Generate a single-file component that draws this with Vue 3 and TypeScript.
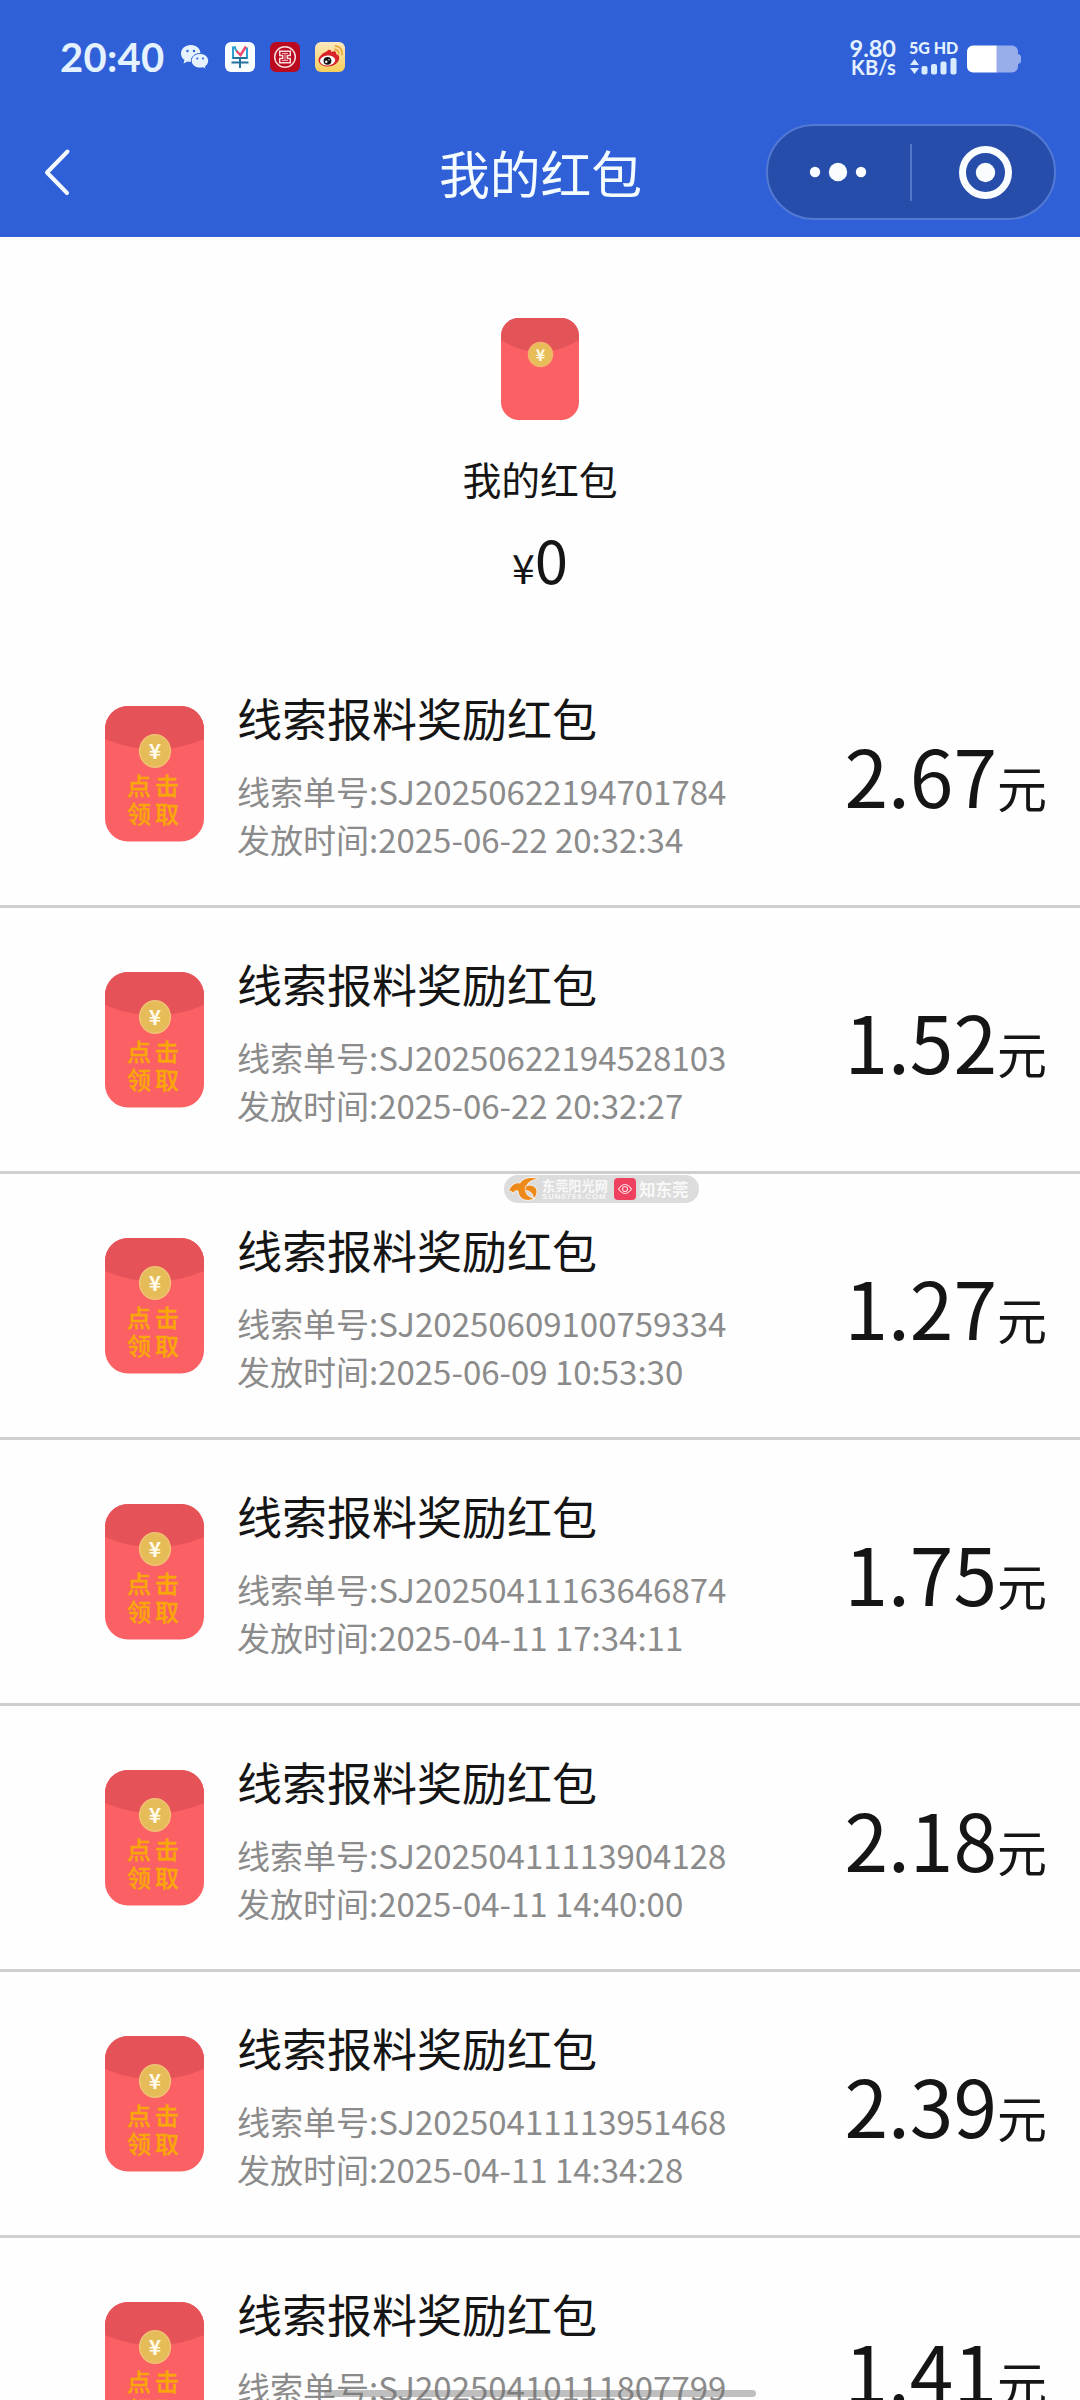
<script setup lang="ts">
interface Reward {
  id: string
  time: string
  amount: string
}

const rewards: Reward[] = [
  { id: 'SJ20250622194701784', time: '2025-06-22 20:32:34', amount: '2.67' },
  { id: 'SJ20250622194528103', time: '2025-06-22 20:32:27', amount: '1.52' },
  { id: 'SJ20250609100759334', time: '2025-06-09 10:53:30', amount: '1.27' },
  { id: 'SJ20250411163646874', time: '2025-04-11 17:34:11', amount: '1.75' },
  { id: 'SJ20250411113904128', time: '2025-04-11 14:40:00', amount: '2.18' },
  { id: 'SJ20250411113951468', time: '2025-04-11 14:34:28', amount: '2.39' },
  { id: 'SJ20250410111807799', time: '', amount: '1.41' },
]
</script>

<template>
  <div class="screen">
    <header class="top">
      <div class="status">
        <span class="clock">20:40</span>
        <svg class="wechat" width="30" height="26" viewBox="0 0 30 26">
          <path d="M11 1C5 1 1 4.700 1 9.500c0 2.700 1.300 5 3.500 6.500L3.500 19.500l4-2c1.100.3 2.300.5 3.500.5 5.500 0 9.500-3.700 9.500-8.500S16.500 1 11 1z" fill="#e6f3ff" />
          <path d="M20 9.500c-5 0-8.700 3.200-8.700 7.300s3.700 7.300 8.700 7.300c1 0 2-.1 2.900-.4l3.300 1.600-.8-2.900c2-1.300 3.200-3.300 3.200-5.600 0-4.100-3.600-7.300-8.600-7.300z" fill="#e6f3ff" stroke="#2f60d8" stroke-width="1" />
          <circle cx="7.500" cy="7" r="1.200" fill="#2f60d8" /><circle cx="14" cy="7" r="1.200" fill="#2f60d8" />
          <circle cx="17.300" cy="14.500" r="1.100" fill="#2f60d8" /><circle cx="23" cy="14.500" r="1.100" fill="#2f60d8" />
        </svg>
        <svg class="app" viewBox="0 0 30 30">
          <rect width="30" height="30" rx="6" fill="#fbfeff" />
          <g fill="none" stroke-width="2">
            <path d="M11 5.500H8v10.500h14V5.500" stroke="#2e9fd0" />
            <path d="M8 16h14M6.500 20.500h17M15 16v10" stroke="#26709f" />
            <path d="M9 4.500l3 5" stroke="#2e9fd0" />
            <path d="M11.500 9l4 4L21 4.500" stroke="#e8496a" stroke-width="2.400" />
          </g>
        </svg>
        <svg class="app" viewBox="0 0 30 30">
          <rect width="30" height="30" rx="6" fill="#b90a20" />
          <circle cx="15" cy="15" r="10.300" fill="none" stroke="#fbdcdc" stroke-width="1.500" />
          <path d="M9.700 9.300h10.600v4.200h-3v3h3v4.200H9.700v-4.200h3v-3h-3z" fill="none" stroke="#fbdcdc" stroke-width="1.500" />
          <path d="M12 11.400h6M12 18.600h6M15 11.400v7.200" stroke="#fbdcdc" stroke-width=".8" />
        </svg>
        <svg class="app" viewBox="0 0 30 30">
          <defs>
            <linearGradient id="weibo" x1="0" y1="0" x2="0" y2="1">
              <stop offset="0" stop-color="#fbe9bd" /><stop offset="1" stop-color="#f8cf5c" />
            </linearGradient>
          </defs>
          <rect width="30" height="30" rx="6" fill="url(#weibo)" />
          <path d="M11.500 9.500c2.200-2.500 5-2.600 4.500.4 3-1.400 6-1 5 2.200 3.200.9 3.800 3.400 2.800 6-1.500 4-6 6.400-11 6.400S3.500 22 3.500 18c0-3 4-7 8-8.500z" fill="#d8232a" />
          <ellipse cx="12.600" cy="18.500" rx="7.600" ry="5" fill="#fff" transform="rotate(-6 12.600 18.500)" />
          <circle cx="12.500" cy="18.800" r="3.900" fill="#111" />
          <circle cx="11.300" cy="19.700" r="1.200" fill="#fff" /><circle cx="14" cy="17.800" r=".7" fill="#fff" />
          <path d="M20.500 3.800a7.200 7.200 0 0 1 6.500 8.700M20 7.500a3.800 3.800 0 0 1 3.600 4" fill="none" stroke="#e8a53c" stroke-width="1.800" stroke-linecap="round" />
        </svg>
        <div class="speed"><span>9.80</span><span class="unit">KB/s</span></div>
        <div class="network">
          <span>5G HD</span>
          <svg width="48" height="17" viewBox="0 0 48 17">
            <g fill="#d9ebff">
              <path d="M5.500 1l4.500 6H1zM1 10h9l-4.500 6z" />
              <rect x="12.500" y="8" width="6" height="8.500" rx="2" />
              <rect x="22" y="6" width="6" height="10.500" rx="2" />
              <rect x="31.500" y="3.500" width="6" height="13" rx="2" />
              <rect x="41.500" y="0" width="6" height="16.500" rx="2" />
            </g>
          </svg>
        </div>
        <svg class="battery" width="54" height="28" viewBox="0 0 54 28">
          <path d="M29 .500h16a6 6 0 0 1 6 6V9c2 .5 3 1.500 3 3v4c0 1.500-1 2.500-3 3v2.500a6 6 0 0 1-6 6H29z" fill="#98aeeb" />
          <path d="M6 .500h23.500v27H6a6 6 0 0 1-6-6v-15a6 6 0 0 1 6-6z" fill="#fff" />
        </svg>
      </div>
      <nav class="nav">
        <svg class="back" width="28" height="48" viewBox="0 0 28 48">
          <path d="M24.500 3.500L4 24.500l20 20.500" fill="none" stroke="#f4faff" stroke-width="4" stroke-linecap="round" stroke-linejoin="round" />
        </svg>
        <h1>我的红包</h1>
        <svg class="capsule" width="290" height="96" viewBox="0 0 290 96">
          <rect x="1" y="1" width="288" height="94" rx="47" fill="#264da9" stroke="#5279d4" stroke-width="2" />
          <g fill="#fafdff">
            <circle cx="49" cy="48" r="5.200" /><circle cx="72" cy="48" r="9.200" /><circle cx="95" cy="48" r="5.200" />
            <circle cx="219.500" cy="48.500" r="9.700" />
          </g>
          <path d="M145 20v57" stroke="#5276c8" stroke-width="2" />
          <circle cx="219.500" cy="48.500" r="23" fill="none" stroke="#fafdff" stroke-width="7" />
        </svg>
      </nav>
    </header>

    <section class="hero">
      <svg width="78" height="102" viewBox="0 0 78 102">
        <defs><clipPath id="hero-shape"><rect width="78" height="102" rx="18" /></clipPath></defs>
        <g clip-path="url(#hero-shape)">
          <rect width="78" height="102" fill="#fb6064" />
          <path d="M0 0h78v22Q39 46 0 22z" fill="#e35459" />
        </g>
        <circle cx="39.500" cy="36.500" r="12" fill="#e7bd58" stroke="#f3b36c" stroke-width="1.500" />
        <text x="39.500" y="43" class="coin" font-size="16">¥</text>
      </svg>
      <p class="label">我的红包</p>
      <p class="balance"><small>¥</small>0</p>
    </section>

    <main class="list">
      <article v-for="r in rewards" :key="r.id" class="row">
        <svg class="packet" width="99" height="136" viewBox="0 0 99 136">
          <defs><clipPath id="packet-shape"><rect width="99" height="135.500" rx="23" /></clipPath></defs>
          <g clip-path="url(#packet-shape)">
            <rect width="99" height="136" fill="#fb6064" />
            <path d="M0 0h99v33Q49.500 54 0 33z" fill="#e55358" />
          </g>
          <ellipse cx="50" cy="45" rx="15.300" ry="16.200" fill="#e5bc57" stroke="#f1c173" stroke-width="1.600" />
          <text x="50" y="53" class="coin" font-size="21">¥</text>
          <g class="claim">
            <text x="50" y="88.500">点击</text>
            <text x="50" y="117">领取</text>
          </g>
        </svg>
        <div class="info">
          <h2>线索报料奖励红包</h2>
          <p>线索单号:{{ r.id }}</p>
          <p v-if="r.time">发放时间:{{ r.time }}</p>
        </div>
        <div class="amount">{{ r.amount }}<small>元</small></div>
      </article>
    </main>

    <div class="badge">
      <svg width="32" height="26" viewBox="0 0 32 26">
        <g stroke="#fff" stroke-width="1.200" paint-order="stroke" fill="#ee8a1b">
          <path d="M1 14.500C4 8 8 6.500 12 7.500 15 2.500 21 1 30 2.500 24 3.500 20 6 18.500 9.500 15.500 15 18 21 26 22.500 19 26 11 23 10.500 15.500 9.500 13.500 7 13.500 5 17 4.500 15.500 3 14.500 1 14.500z" />
          <path d="M17.500 11c5-3.500 12-.500 11 6-.4 2.500-1.500 4-3 5 .5-4-2.500-7-8-8z" />
        </g>
      </svg>
      <div class="site"><b>东莞阳光网</b><i>SUN0769.COM</i></div>
      <svg width="22" height="22" viewBox="0 0 22 22">
        <rect width="22" height="22" rx="4" fill="#f0405f" />
        <path d="M4.500 11q6.500-9 13 0-6.500 9-13 0z" fill="none" stroke="#ffd5dd" stroke-width="1.200" />
        <circle cx="11" cy="11" r="2.500" fill="none" stroke="#ffd5dd" stroke-width="1.200" />
      </svg>
      <b class="brand">知东莞</b>
    </div>
    <div class="home-bar"></div>
  </div>
</template>

<style>
body {
  margin: 0;
  background: #fefefe;
}
</style>

<style scoped>
.screen {
  position: relative;
  width: 1080px;
  height: 2400px;
  overflow: hidden;
  background: #fefefe;
  color: #151515;
  font-family: "Noto Sans CJK SC", sans-serif;
}
h1, h2, p {
  margin: 0;
  font-weight: 400;
}
svg {
  display: block;
  flex: none;
}
.top {
  height: 237px;
  background: #2f60d8;
}
.status {
  display: flex;
  align-items: center;
  box-sizing: border-box;
  height: 114px;
  padding: 0 60px;
  color: #e4f1ff;
}
.clock {
  width: 120px;
  font: 700 40px/46px Lato, sans-serif;
  letter-spacing: 0.3px;
}
.wechat { margin-right: 15px; }
.app {
  width: 30px;
  height: 30px;
  margin-right: 15px;
}
.speed {
  display: flex;
  flex-direction: column;
  align-items: flex-end;
  width: 60px;
  margin-left: auto;
  font: 700 23.500px/20px Lato, sans-serif;
}
.speed .unit {
  font-size: 20px;
  line-height: 19px;
  letter-spacing: 0.2px;
}
.network {
  display: flex;
  flex-direction: column;
  width: 48px;
  margin: 0 10px 0 13px;
  font: 900 16px/18px Lato, sans-serif;
  white-space: nowrap;
}
.network span { transform: translateY(-1px); }
.battery { margin: 3px -1px 0 0; }
.nav {
  display: flex;
  align-items: center;
  justify-content: space-between;
  height: 116px;
  padding: 0 24px 0 43px;
}
.nav h1 {
  flex: 1;
  padding: 0 0 1px 244px;
  text-align: center;
  color: #f5fcff;
  font-size: 50.800px;
  line-height: 70px;
}
.hero {
  display: flex;
  flex-direction: column;
  align-items: center;
  box-sizing: border-box;
  height: 405px;
  padding-top: 81px;
}
.label {
  margin-top: 30px;
  font-size: 38.800px;
  line-height: 56px;
}
.balance {
  margin-top: 10px;
  font-size: 60px;
  line-height: 84px;
}
.balance small { font-size: 41px; }
.coin {
  fill: #fffbe8;
  text-anchor: middle;
  font-weight: 700;
}
.row {
  display: flex;
  box-sizing: border-box;
  height: 266px;
  padding: 0 33px 0 105px;
  border-bottom: 3px solid #cfcfcf;
}
.packet { margin-top: 63.500px; }
.claim {
  fill: #f9a60a;
  stroke: #f9a60a;
  stroke-width: 0.4px;
  font-size: 24px;
  font-weight: 500;
  letter-spacing: 4px;
  text-anchor: middle;
}
.info {
  flex: 1;
  padding: 44px 0 0 33px;
}
.info h2 {
  margin-bottom: 17px;
  font-size: 45px;
  line-height: 64px;
}
.info p {
  color: #8b8b8b;
  font-size: 33px;
  line-height: 48px;
}
.amount {
  padding-top: 74px;
  font-size: 78.500px;
  line-height: 116px;
  white-space: nowrap;
}
.amount small { font-size: 50px; }
.badge {
  position: absolute;
  left: 504px;
  top: 1175px;
  display: flex;
  align-items: center;
  box-sizing: border-box;
  width: 195px;
  height: 28px;
  padding-left: 4px;
  border-radius: 14px;
  background: #dcdcdc;
  color: #f8f8f8;
}
.site {
  display: flex;
  flex-direction: column;
  width: 67px;
  margin: 0 5px 0 2px;
  white-space: nowrap;
}
.site b {
  font-size: 13.200px;
  line-height: 15px;
}
.site i {
  font: 700 8px/8px "Liberation Sans", sans-serif;
  letter-spacing: 0.8px;
}
.brand {
  margin-left: 3px;
  font-size: 16.500px;
  line-height: 22px;
}
.home-bar {
  position: absolute;
  left: 324px;
  top: 2390px;
  width: 432px;
  height: 7px;
  border-radius: 4px;
  background: rgba(110, 110, 110, 0.43);
}
</style>
